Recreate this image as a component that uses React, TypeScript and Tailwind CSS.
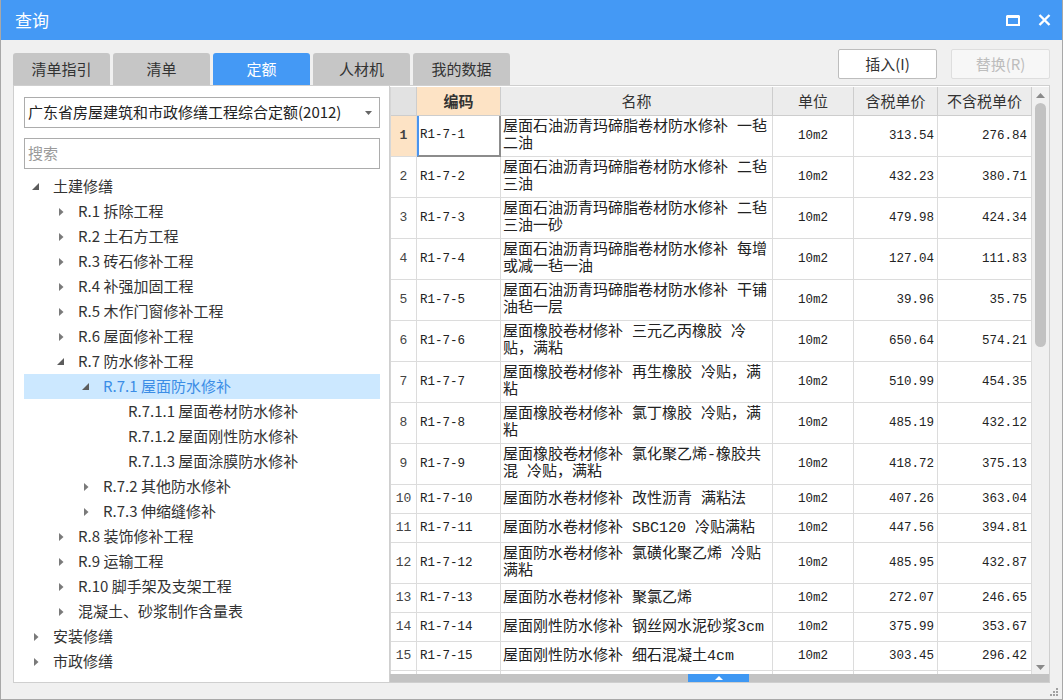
import React from 'react';
import clsx from 'clsx';

type TreeItem = { label: string; level: number; state: 'open' | 'closed' | 'leaf'; selected?: boolean };

const tree: TreeItem[] = [
    { label: '土建修缮', level: 0, state: 'open' },
    { label: 'R.1 拆除工程', level: 1, state: 'closed' },
    { label: 'R.2 土石方工程', level: 1, state: 'closed' },
    { label: 'R.3 砖石修补工程', level: 1, state: 'closed' },
    { label: 'R.4 补强加固工程', level: 1, state: 'closed' },
    { label: 'R.5 木作门窗修补工程', level: 1, state: 'closed' },
    { label: 'R.6 屋面修补工程', level: 1, state: 'closed' },
    { label: 'R.7 防水修补工程', level: 1, state: 'open' },
    { label: 'R.7.1 屋面防水修补', level: 2, state: 'open', selected: true },
    { label: 'R.7.1.1 屋面卷材防水修补', level: 3, state: 'leaf' },
    { label: 'R.7.1.2 屋面刚性防水修补', level: 3, state: 'leaf' },
    { label: 'R.7.1.3 屋面涂膜防水修补', level: 3, state: 'leaf' },
    { label: 'R.7.2 其他防水修补', level: 2, state: 'closed' },
    { label: 'R.7.3 伸缩缝修补', level: 2, state: 'closed' },
    { label: 'R.8 装饰修补工程', level: 1, state: 'closed' },
    { label: 'R.9 运输工程', level: 1, state: 'closed' },
    { label: 'R.10 脚手架及支架工程', level: 1, state: 'closed' },
    { label: '混凝土、砂浆制作含量表', level: 1, state: 'closed' },
    { label: '安装修缮', level: 0, state: 'closed' },
    { label: '市政修缮', level: 0, state: 'closed' },
];

const indent = ['pl-0', 'pl-[25px]', 'pl-[50px]', 'pl-[75px]'];

type Row = { n: number; code: string; name: string[]; a: string; b: string };

const S = '屋面石油沥青玛碲脂卷材防水修补';
const rows: Row[] = [
    { n: 1, code: 'R1-7-1', name: [S + ' 一毡', '二油'], a: '313.54', b: '276.84' },
    { n: 2, code: 'R1-7-2', name: [S + ' 二毡', '三油'], a: '432.23', b: '380.71' },
    { n: 3, code: 'R1-7-3', name: [S + ' 二毡', '三油一砂'], a: '479.98', b: '424.34' },
    { n: 4, code: 'R1-7-4', name: [S + ' 每增', '或减一毡一油'], a: '127.04', b: '111.83' },
    { n: 5, code: 'R1-7-5', name: [S + ' 干铺', '油毡一层'], a: '39.96', b: '35.75' },
    { n: 6, code: 'R1-7-6', name: ['屋面橡胶卷材修补 三元乙丙橡胶 冷', '贴，满粘'], a: '650.64', b: '574.21' },
    { n: 7, code: 'R1-7-7', name: ['屋面橡胶卷材修补 再生橡胶 冷贴，满', '粘'], a: '510.99', b: '454.35' },
    { n: 8, code: 'R1-7-8', name: ['屋面橡胶卷材修补 氯丁橡胶 冷贴，满', '粘'], a: '485.19', b: '432.12' },
    { n: 9, code: 'R1-7-9', name: ['屋面橡胶卷材修补 氯化聚乙烯-橡胶共', '混 冷贴，满粘'], a: '418.72', b: '375.13' },
    { n: 10, code: 'R1-7-10', name: ['屋面防水卷材修补 改性沥青 满粘法'], a: '407.26', b: '363.04' },
    { n: 11, code: 'R1-7-11', name: ['屋面防水卷材修补 SBC120 冷贴满粘'], a: '447.56', b: '394.81' },
    { n: 12, code: 'R1-7-12', name: ['屋面防水卷材修补 氯磺化聚乙烯 冷贴', '满粘'], a: '485.95', b: '432.87' },
    { n: 13, code: 'R1-7-13', name: ['屋面防水卷材修补 聚氯乙烯'], a: '272.07', b: '246.65' },
    { n: 14, code: 'R1-7-14', name: ['屋面刚性防水修补 钢丝网水泥砂浆3cm'], a: '375.99', b: '353.67' },
    { n: 15, code: 'R1-7-15', name: ['屋面刚性防水修补 细石混凝土4cm'], a: '303.45', b: '296.42' },
];

const tabs = ['清单指引', '清单', '定额', '人材机', '我的数据'];

const cols = 'grid grid-cols-[26px_84px_272px_81px_84px_94px]';
const cell = 'border-r border-b border-[#dcdcdc] flex items-center';
const mono = "font-['Liberation_Mono','Noto_Sans_CJK_SC',monospace]";

const TreeArrow = ({ state }: { state: TreeItem['state'] }) => {
    if (state === 'leaf') return null;
    if (state === 'open') {
        return (
            <svg width="8" height="7" viewBox="0 0 8 7" className="ml-[8px]">
                <polygon points="7,0 7,7 0,7" fill="#5c5c5c" />
            </svg>
        );
    }
    return (
        <svg width="5" height="8" viewBox="0 0 5 8" className="ml-[10px]">
            <polygon points="0,0 4.5,4 0,8" fill="#7a7a7a" />
        </svg>
    );
};

export default function App() {
    return (
        <div className="w-[1063px] h-[700px] overflow-hidden flex flex-col bg-[#f0f0f0] border-x border-b border-[#a8a8a8] font-['Noto_Sans_CJK_SC','Noto_Sans',sans-serif] text-[#333]">
            {/* title bar */}
            <div className="h-[40px] shrink-0 bg-[#4499f5] flex items-center justify-between pl-[15px] pr-[12px] -mx-px">
                <span className="text-[17px] text-white">查询</span>
                <div className="flex items-center gap-[18px]">
                    <svg width="14" height="11" viewBox="0 0 14 11">
                        <rect x="1" y="1.5" width="12" height="8.5" fill="none" stroke="#fff" strokeWidth="2" />
                        <rect x="1" y="0" width="12" height="3" fill="#fff" />
                    </svg>
                    <svg width="13" height="12" viewBox="0 0 13 12">
                        <path d="M1.5 1 L11.5 11 M11.5 1 L1.5 11" stroke="#fff" strokeWidth="2.4" />
                    </svg>
                </div>
            </div>

            {/* tabs + buttons */}
            <div className="h-[45px] shrink-0 flex justify-between pl-[12px] pr-[12px]">
                <div className="flex items-end gap-[3px]">
                    {tabs.map(t => (
                        <div
                            key={t}
                            className={clsx(
                                'w-[97px] h-[32px] rounded-t-[3px] flex items-center justify-center text-[15px]',
                                t === '定额' ? 'bg-[#4499f5] text-white' : 'bg-[#c6c6c6] text-[#333]'
                            )}
                        >
                            {t}
                        </div>
                    ))}
                </div>
                <div className="flex items-start gap-[14px] pt-[9px]">
                    <button className="w-[99px] h-[30px] bg-white border border-[#bdbdbd] rounded-[2px] text-[15px] text-[#333]">插入(I)</button>
                    <button className="w-[99px] h-[30px] bg-[#f7f7f7] border border-[#dedede] rounded-[2px] text-[15px] text-[#bdbdbd]">替换(R)</button>
                </div>
            </div>

            {/* main */}
            <div className="h-[598px] shrink-0 flex pl-[12px] pr-[12px]">
                {/* left tree panel */}
                <div className="w-[376px] shrink-0 bg-white border-t border-l border-b border-[#cfcfcf] pt-[11px] pl-[10px] pr-[9px] flex flex-col">
                    <div className="h-[31px] border border-[#acacac] flex items-center justify-between pl-[3px] pr-[7px]">
                        <span className="text-[15px] text-[#222] whitespace-nowrap">广东省房屋建筑和市政修缮工程综合定额(2012)</span>
                        <svg width="7" height="4" viewBox="0 0 7 4">
                            <polygon points="0,0 7,0 3.5,4" fill="#666" />
                        </svg>
                    </div>
                    <div className="h-[31px] mt-[10px] border border-[#acacac] flex items-center pl-[3px]">
                        <span className="text-[15px] text-[#9a9a9a]">搜索</span>
                    </div>
                    <div className="mt-[5px] flex flex-col">
                        {tree.map(item => (
                            <div
                                key={item.label}
                                className={clsx('h-[25px] flex items-center', indent[item.level], item.selected && 'bg-[#cce8ff]')}
                            >
                                <div className="w-[29px] shrink-0 flex items-center">
                                    <TreeArrow state={item.state} />
                                </div>
                                <span className={clsx('text-[15px] whitespace-nowrap', item.selected ? 'text-[#3b8de6]' : 'text-[#333]')}>
                                    {item.label}
                                </span>
                            </div>
                        ))}
                    </div>
                </div>

                {/* right grid panel */}
                <div className="flex-1 flex flex-col bg-white border border-[#cfcfcf]">
                    <div className="flex-1 flex overflow-hidden pt-px">
                        <div className="w-[642px] shrink-0 border-l border-[#d6d6d6] flex flex-col overflow-hidden">
                            {/* header */}
                            <div className={clsx(cols, 'h-[29px] shrink-0 text-[15px] text-[#333]')}>
                                <div className="bg-[#e2e2e2] border-r border-b border-[#cdcdcd]" />
                                <div className="bg-[#fde3c5] border-r border-b border-[#cdcdcd] flex items-center justify-center font-bold">编码</div>
                                <div className="bg-[#ececec] border-r border-b border-[#cdcdcd] flex items-center justify-center">名称</div>
                                <div className="bg-[#ececec] border-r border-b border-[#cdcdcd] flex items-center justify-center">单位</div>
                                <div className="bg-[#ececec] border-r border-b border-[#cdcdcd] flex items-center justify-center">含税单价</div>
                                <div className="bg-[#ececec] border-r border-b border-[#cdcdcd] flex items-center justify-center">不含税单价</div>
                            </div>
                            {/* body */}
                            {rows.map(r => {
                                const first = r.n === 1;
                                return (
                                    <div key={r.n} className={clsx(cols, 'shrink-0', r.name.length > 1 ? 'h-[41px]' : 'h-[29px]')}>
                                        <div className={clsx(cell, mono, 'justify-center text-[13px] text-[#444]', first && 'bg-[#fde3c5] font-bold text-[#222]')}>
                                            {r.n}
                                        </div>
                                        <div
                                            className={clsx(
                                                cell,
                                                mono,
                                                'text-[12.5px] text-[#222]',
                                                first ? 'border-l-2 border-l-[#4a94ee] border-r-2 border-b-2 border-r-[#8c8c8c] border-b-[#8c8c8c] pl-[1px]' : 'pl-[3px]'
                                            )}
                                        >
                                            {r.code}
                                        </div>
                                        <div className={clsx(cell, 'pl-[2px] overflow-hidden')}>
                                            <div className={clsx(mono, 'text-[15px] leading-[17px] text-[#222] whitespace-nowrap')}>
                                                {r.name.map((l, i) => (
                                                    <div key={i}>{l}</div>
                                                ))}
                                            </div>
                                        </div>
                                        <div className={clsx(cell, mono, 'justify-center text-[12.5px] text-[#222]')}>10m2</div>
                                        <div className={clsx(cell, mono, 'justify-end pr-[3px] text-[12.5px] text-[#222]')}>{r.a}</div>
                                        <div className={clsx(cell, mono, 'justify-end pr-[4px] text-[12.5px] text-[#222]')}>{r.b}</div>
                                    </div>
                                );
                            })}
                            {/* next row, mostly scrolled out of view */}
                            <div className={clsx(cols, 'h-[29px] shrink-0')}>
                                <div className={cell} />
                                <div className={cell} />
                                <div className={cell} />
                                <div className={cell} />
                                <div className={cell} />
                                <div className={cell} />
                            </div>
                        </div>
                        {/* vertical scrollbar */}
                        <div className="flex-1 bg-[#f0f0f0] flex flex-col items-center pt-[6px] pb-[4px]">
                            <svg width="9" height="5" viewBox="0 0 9 5">
                                <polygon points="0,5 9,5 4.5,0" fill="#8a8a8a" />
                            </svg>
                            <div className="w-[11px] h-[244px] mt-[5px] rounded-full bg-[#c2c2c2]" />
                            <div className="flex-1" />
                            <svg width="9" height="5" viewBox="0 0 9 5">
                                <polygon points="0,0 9,0 4.5,5" fill="#8a8a8a" />
                            </svg>
                        </div>
                    </div>
                    {/* horizontal bar */}
                    <div className="h-[8px] shrink-0 bg-[#c3c3c3] flex pl-[298px]">
                        <div className="w-[61px] h-full bg-[#3f98f3] flex items-center justify-center">
                            <svg width="8" height="4" viewBox="0 0 8 4">
                                <polygon points="0,4 8,4 4,0" fill="#fff" />
                            </svg>
                        </div>
                    </div>
                </div>
            </div>

            {/* bottom strip with resize grip */}
            <div className="flex-1 flex justify-end items-start pr-[3px] pt-[4px]">
                <svg width="10" height="10" viewBox="0 0 10 10">
                    <rect x="7" y="1" width="2" height="2" fill="#a0a0a0" />
                    <rect x="4" y="4" width="2" height="2" fill="#a0a0a0" />
                    <rect x="7" y="4" width="2" height="2" fill="#a0a0a0" />
                    <rect x="1" y="7" width="2" height="2" fill="#a0a0a0" />
                    <rect x="4" y="7" width="2" height="2" fill="#a0a0a0" />
                    <rect x="7" y="7" width="2" height="2" fill="#a0a0a0" />
                </svg>
            </div>
        </div>
    );
}
